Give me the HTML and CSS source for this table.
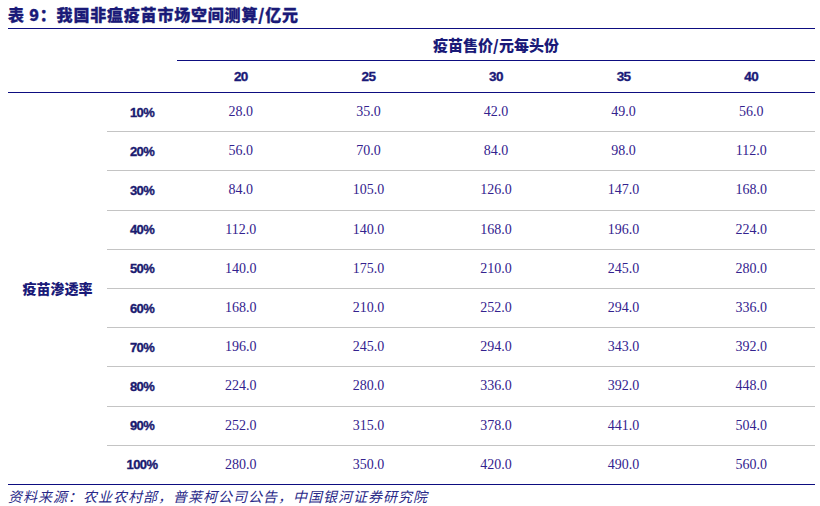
FILE: index.html
```html
<!DOCTYPE html>
<html lang="zh-CN">
<head>
<meta charset="utf-8">
<title>表 9</title>
<link rel="stylesheet" href="styles.css">
</head>
<body>
<div class="page">
  <h1 class="title">表 9：我国非瘟疫苗市场空间测算/亿元</h1>
  <table class="grid">
    <colgroup>
      <col class="c-side"><col class="c-rate">
      <col class="c-data"><col class="c-data"><col class="c-data"><col class="c-data"><col class="c-data">
    </colgroup>
    <thead>
      <tr class="h1">
        <th colspan="2" class="blank"></th>
        <th colspan="5" class="group">疫苗售价/元每头份</th>
      </tr>
      <tr class="h2">
        <th colspan="2" class="blank"></th>
        <th>20</th><th>25</th><th>30</th><th>35</th><th>40</th>
      </tr>
    </thead>
    <tbody>
      <tr><th rowspan="10" class="side">疫苗渗透率</th><th class="rate">10%</th><td>28.0</td><td>35.0</td><td>42.0</td><td>49.0</td><td>56.0</td></tr>
      <tr><th class="rate">20%</th><td>56.0</td><td>70.0</td><td>84.0</td><td>98.0</td><td>112.0</td></tr>
      <tr><th class="rate">30%</th><td>84.0</td><td>105.0</td><td>126.0</td><td>147.0</td><td>168.0</td></tr>
      <tr><th class="rate">40%</th><td>112.0</td><td>140.0</td><td>168.0</td><td>196.0</td><td>224.0</td></tr>
      <tr><th class="rate">50%</th><td>140.0</td><td>175.0</td><td>210.0</td><td>245.0</td><td>280.0</td></tr>
      <tr><th class="rate">60%</th><td>168.0</td><td>210.0</td><td>252.0</td><td>294.0</td><td>336.0</td></tr>
      <tr><th class="rate">70%</th><td>196.0</td><td>245.0</td><td>294.0</td><td>343.0</td><td>392.0</td></tr>
      <tr><th class="rate">80%</th><td>224.0</td><td>280.0</td><td>336.0</td><td>392.0</td><td>448.0</td></tr>
      <tr><th class="rate">90%</th><td>252.0</td><td>315.0</td><td>378.0</td><td>441.0</td><td>504.0</td></tr>
      <tr class="last"><th class="rate">100%</th><td>280.0</td><td>350.0</td><td>420.0</td><td>490.0</td><td>560.0</td></tr>
    </tbody>
  </table>
  <p class="source">资料来源：农业农村部，普莱柯公司公告，中国银河证券研究院</p>
</div>
</body>
</html>
```

FILE: styles.css
```css
html, body {
  margin: 0;
  padding: 0;
  background: #ffffff;
}

.page {
  width: 807px;
  padding: 0 5px 0 8px;
  color: #1c1a7a;
}

.title {
  margin: 0;
  height: 29px;
  line-height: 28px;
  font-family: "Noto Sans CJK SC", "Liberation Sans", sans-serif;
  font-weight: 900;
  font-size: 16px;
  letter-spacing: 0.8px;
  color: #1a1a78;
  -webkit-text-stroke: 0.3px #1a1a78;
  border-bottom: 1.5px solid #0d0d80;
  box-sizing: border-box;
}

.grid {
  width: 807px;
  border-collapse: collapse;
  table-layout: fixed;
}

.c-side { width: 99px; }
.c-rate { width: 70px; }
.c-data { width: 127.6px; }

.grid th,
.grid td {
  padding: 0;
  text-align: center;
  vertical-align: middle;
}

.h1 th, .h2 th {
  height: 31px;
}

.h1 .group {
  font-family: "Noto Sans CJK SC", sans-serif;
  font-weight: 900;
  font-size: 15px;
  color: #1a1a78;
  border-bottom: 1.5px solid #0d0d80;
}

.h2 {
  border-bottom: 1.5px solid #0d0d80;
}

.h2 th {
  font-family: "Liberation Sans", "DejaVu Sans", sans-serif;
  font-weight: 700;
  font-size: 13.5px;
  letter-spacing: -0.6px;
  -webkit-text-stroke: 0.35px #1a1a78;
  color: #1a1a78;
}

.grid tbody tr {
  height: 39.2px;
}

.grid tbody th.rate,
.grid tbody td {
  border-bottom: 1px solid #c4c4c4;
}

.grid tbody tr.last th.rate,
.grid tbody tr.last td {
  border-bottom: 1.5px solid #0d0d80;
}

.grid tbody tr.last {
  border-bottom: 1.5px solid #0d0d80;
}

.side {
  font-family: "Noto Sans CJK SC", sans-serif;
  font-weight: 900;
  font-size: 14px;
  color: #1a1a78;
}

.rate {
  font-family: "Liberation Sans", "DejaVu Sans", sans-serif;
  font-weight: 700;
  font-size: 13px;
  letter-spacing: -0.6px;
  -webkit-text-stroke: 0.35px #1a1a70;
  color: #1a1a70;
}

.grid td {
  font-family: "Liberation Serif", "Times New Roman", serif;
  font-size: 14px;
  color: #33228e;
}

.source {
  margin: 0;
  padding-top: 2px;
  font-family: "Noto Sans CJK SC", sans-serif;
  font-style: italic;
  font-size: 14px;
  letter-spacing: 1px;
  line-height: 18px;
  color: #2a2a88;
}
```
